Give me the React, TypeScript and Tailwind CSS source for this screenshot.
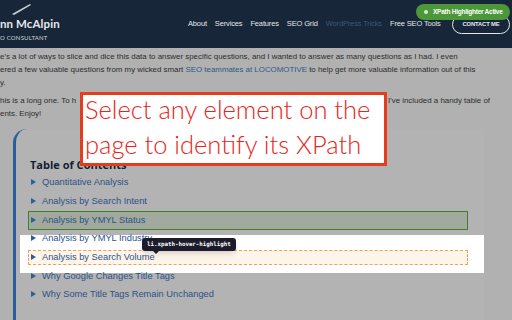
import React from 'react';

const tocItems = [
  'Quantitative Analysis',
  'Analysis by Search Intent',
  'Analysis by YMYL Status',
  'Analysis by YMYL Industry',
  'Analysis by Search Volume',
  'Why Google Changes Title Tags',
  'Why Some Title Tags Remain Unchanged',
];

const navLinks = [
  { label: 'About', dim: false },
  { label: 'Services', dim: false },
  { label: 'Features', dim: false },
  { label: 'SEO Grid', dim: false },
  { label: 'WordPress Tricks', dim: true },
  { label: 'Free SEO Tools', dim: false },
];

const Arrow: React.FC = () => (
  <svg width="5" height="6" viewBox="0 0 5 6" className="shrink-0 mr-[6px] -mt-[2px]">
    <polygon points="0,0 5,3 0,6" fill="#2b5d99" />
  </svg>
);

export default function App() {
  return (
    <div
      className="relative w-[512px] h-[320px] overflow-hidden bg-[#b1b1b1] flex flex-col"
      style={{ fontFamily: '"Liberation Sans", Arial, sans-serif' }}
    >
      {/* header */}
      <header className="h-[48px] shrink-0 bg-[#172638] flex items-center">
        <div className="relative w-[180px] h-full">
          <svg width="20" height="12" viewBox="0 0 20 12" className="absolute left-[12px] top-[4px]">
            <polygon points="0,10 18,0 19,1 2,11" fill="#c9ced6" />
          </svg>
          <div className="absolute left-0 top-[17px] text-[11.5px] font-bold text-[#e6e8ec] leading-[14px] tracking-[0.1px]" style={{ fontFamily: 'Lato, sans-serif' }}>
            nn McAlpin
          </div>
          <div className="absolute left-0 top-[34px] text-[6px] text-[#d4d8de] leading-[7px] tracking-[0.2px]" style={{ fontFamily: 'Lato, sans-serif' }}>
            O CONSULTANT
          </div>
        </div>
        <nav className="flex items-center gap-[8px] ml-[8px] text-[7.5px] tracking-[-0.15px] leading-none">
          {navLinks.map((l) => (
            <span key={l.label} className={l.dim ? 'text-[#3b5775]' : 'text-[#e3e6ea]'}>
              {l.label}
            </span>
          ))}
        </nav>
        <div className="ml-auto mr-[2px] mt-[1px] w-[58px] h-[19px] rounded-full border border-[#e3e6ea] flex items-center justify-center text-[5.8px] font-bold text-[#e8eaee] tracking-[-0.1px]">
          CONTACT ME
        </div>
      </header>

      {/* extension badge */}
      <div className="absolute right-[2px] top-[4px] w-[94px] h-[16px] rounded-full bg-[#4b973a] flex items-center pl-[8px]">
        <span className="w-[4px] h-[4px] rounded-full bg-[#d7ecd2] mr-[5px]" />
        <span className="text-[6.5px] font-bold text-white tracking-[-0.25px] whitespace-nowrap">XPath Highlighter Active</span>
      </div>

      {/* intro text */}
      <div className="text-[7.9px] leading-[13px] text-[#2c2c2c] whitespace-nowrap pt-[2px]">
        <div>e's a lot of ways to slice and dice this data to answer specific questions, and I wanted to answer as many questions as I had. I even</div>
        <div>
          ered a few valuable questions from my wicked smart <span className="text-[#2d5889]">SEO teammates at LOCOMOTIVE</span> to help get more valuable information out of this
        </div>
        <div>y.</div>
        <div className="mt-[5px] flex">
          <span className="inline-block w-[388px] overflow-hidden">his is a long one. To h</span>
          <span>I've included a handy table of</span>
        </div>
        <div>ents. Enjoy!</div>
      </div>

      {/* table of contents card */}
      <div className="relative mt-[9px] ml-[13px] w-[471px] flex-1 bg-[#b3b3b3] border-l-[3px] border-[#2b5d99] rounded-tl-[14px] pt-[27px]">
        <div className="absolute left-[4px] top-[106px] w-[464px] h-[38px] bg-white" />
        <h2 className="relative h-[18px] leading-[18px] ml-[14px] text-[11px] font-bold text-[#161d33]" style={{ fontFamily: '"Open Sans", sans-serif' }}>
          Table of Contents
        </h2>
        <ul className="relative text-[9.3px] text-[#2d5188]">
          {tocItems.map((item, i) => (
            <li key={item} className="h-[18.67px] flex items-center ml-[12px]">
              <div
                className={
                  i === 2
                    ? 'w-[440px] h-[19px] flex items-center pl-[2px] border border-[#3e7e2d] bg-[#a2aa9e]'
                    : i === 4
                    ? 'w-[440px] h-[15px] flex items-center pl-[2px] border border-dashed border-[#f0a05a] bg-[#fdf5ea]'
                    : 'w-[440px] flex items-center pl-[3px]'
                }
              >
                <Arrow />
                <span className="whitespace-nowrap">{item}</span>
              </div>
            </li>
          ))}
        </ul>
      </div>

      {/* instruction box */}
      <div className="absolute left-[80px] top-[92px] w-[307px] h-[74px] bg-white border-[3px] border-[#e63c1e] overflow-hidden">
        <div className="-mt-[3px] pl-[2px] text-[25.5px] leading-[35px] font-light text-[#e8251a] whitespace-nowrap" style={{ fontFamily: '"Lato Light", Lato, sans-serif' }}>
          <div>Select any element on the</div>
          <div>page to identify its XPath</div>
        </div>
      </div>

      {/* tooltip */}
      <div className="absolute left-[142px] top-[238px] h-[13px] px-[5px] rounded-[3px] bg-[#1b1b2b] flex items-center shadow-md">
        <span className="text-[5.8px] font-bold text-white whitespace-nowrap" style={{ fontFamily: '"DejaVu Sans Mono", monospace' }}>
          li.xpath-hover-highlight
        </span>
        <span className="absolute left-[11px] -bottom-[3px] w-0 h-0 border-l-[3px] border-r-[3px] border-t-[3px] border-l-transparent border-r-transparent border-t-[#1b1b2b]" />
      </div>
    </div>
  );
}
